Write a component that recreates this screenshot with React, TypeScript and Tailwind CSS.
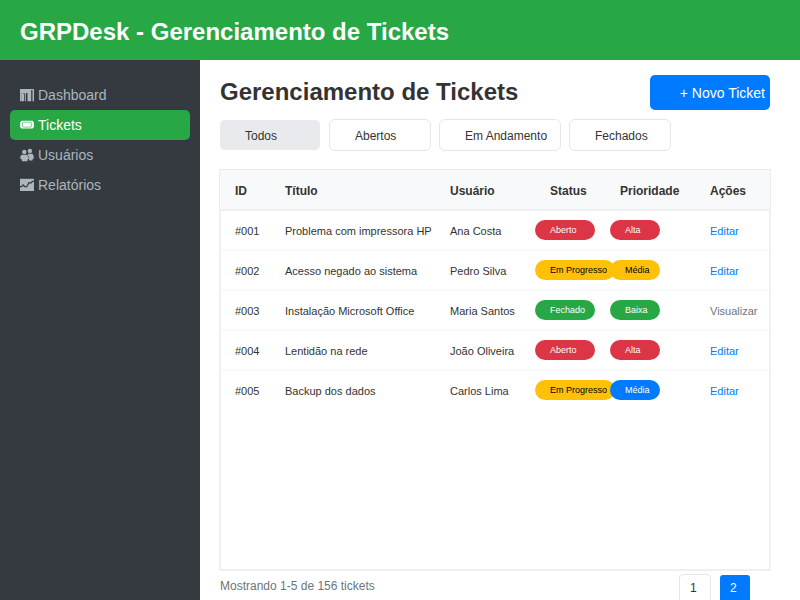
import type { ReactNode } from "react";

type Badge = { label: string; tone: string };
type Ticket = { id: string; title: string; user: string; status: Badge; priority: Badge; action: string };

const red = "bg-[#dc3545] text-white";
const green = "bg-[#28a745] text-white";
const yellow = "bg-[#ffc107] text-black";
const blue = "bg-[#007bff] text-white";

const tickets: Ticket[] = [
  { id: "#001", title: "Problema com impressora HP", user: "Ana Costa", status: { label: "Aberto", tone: red }, priority: { label: "Alta", tone: red }, action: "Editar" },
  { id: "#002", title: "Acesso negado ao sistema", user: "Pedro Silva", status: { label: "Em Progresso", tone: yellow }, priority: { label: "Média", tone: yellow }, action: "Editar" },
  { id: "#003", title: "Instalação Microsoft Office", user: "Maria Santos", status: { label: "Fechado", tone: green }, priority: { label: "Baixa", tone: green }, action: "Visualizar" },
  { id: "#004", title: "Lentidão na rede", user: "João Oliveira", status: { label: "Aberto", tone: red }, priority: { label: "Alta", tone: red }, action: "Editar" },
  { id: "#005", title: "Backup dos dados", user: "Carlos Lima", status: { label: "Em Progresso", tone: yellow }, priority: { label: "Média", tone: blue }, action: "Editar" },
];

const BarsIcon = () => (
  <svg width="14" height="14" viewBox="0 0 14 14" fill="currentColor">
    <path d="M0 1h14v12.200h-1.500V2h-1.300v11.200H7.500V5H6v8.200H5.200V5.500H3v7.700H1.500V4.200H1.300v9H0z" />
    <path d="M3 6h1.200v7.200H3z" />
  </svg>
);

const TicketIcon = () => (
  <svg width="14" height="14" viewBox="0 0 14 14">
    <path d="M1.200 2.700h11.600c0 .9.4 1.300 1.200 1.400v1c-.6.1-.6.9 0 1v1.100c-.6.1-.6.9 0 1v1.100c-.8.1-1.200.5-1.200 1.300H1.200C1.200 9.800.8 9.400 0 9.300V8.200c.6-.1.6-.9 0-1V6.100c.6-.1.6-.9 0-1v-1C.8 4 1.200 3.600 1.200 2.700z" fill="currentColor" />
    <rect x="2.600" y="4.200" width="8.800" height="4.900" rx=".8" fill="none" stroke="#28a745" strokeWidth=".6" />
  </svg>
);

const UsersIcon = () => (
  <svg width="14" height="14" viewBox="0 0 14 14" fill="currentColor">
    <circle cx="9.900" cy="2.900" r="2.200" />
    <path d="M7.800 5.700h4.300c1.300.5 1.900 2.700 1.700 4.700l-1 .3-.4 1.700H9.300z" />
    <g stroke="#343a40" strokeWidth=".8" paintOrder="stroke">
      <path d="M2 6.800h4.700c1.300.5 2 2.200 2.100 4.100l-1.100.3-.4 2.100H2l-.5-2.200-1.300-.4C.1 8.800.7 7.200 2 6.800z" />
      <circle cx="4.300" cy="4" r="2.200" />
    </g>
  </svg>
);

const TrendIcon = () => (
  <svg width="14" height="14" viewBox="0 0 14 14">
    <rect y=".8" width="14" height="12.200" fill="currentColor" />
    <path d="M0 8.600h1.800l1.300-1.800 2.100 2.100 1.600-.2 2.100-4 1.900.3 1.700-1.700H14" fill="none" stroke="#343a40" strokeWidth="1.200" />
  </svg>
);

function NavItem({ icon, label, active = false }: { icon: ReactNode; label: string; active?: boolean }) {
  return (
    <a className={`flex h-[30px] items-center gap-1 rounded-[5px] pl-2.5 text-sm ${active ? "bg-[#28a745] text-white" : "text-[#adb5bd]"}`}>
      {icon}
      <span>{label}</span>
    </a>
  );
}

const columns = "grid grid-cols-[50px_165px_85px_75px_100px_60px]";

function Pill({ badge, width }: { badge: Badge; width: string }) {
  return (
    <span className={`h-5 shrink-0 rounded-full pl-[15px] text-[9px] leading-[20px] whitespace-nowrap ${width} ${badge.tone}`}>
      {badge.label}
    </span>
  );
}

function Filter({ label, width }: { label: string; width: string }) {
  return (
    <button className={`h-8 rounded-md border border-[#e3e6e9] pt-0.5 pl-[25px] text-left whitespace-nowrap ${width}`}>
      {label}
    </button>
  );
}

export default function App() {
  return (
    <div className="flex h-[600px] w-[800px] flex-col overflow-hidden bg-white font-['Liberation_Sans',Arial,sans-serif] text-[#333]">
      <header className="flex h-[60px] shrink-0 items-center bg-[#28a745] pt-1 pl-5">
        <h1 className="text-2xl font-bold text-white">GRPDesk - Gerenciamento de Tickets</h1>
      </header>
      <div className="flex min-h-0 flex-1">
        <nav className="w-[200px] shrink-0 bg-[#343a40] px-2.5 pt-5">
          <NavItem icon={<BarsIcon />} label="Dashboard" />
          <NavItem icon={<TicketIcon />} label="Tickets" active />
          <NavItem icon={<UsersIcon />} label="Usuários" />
          <NavItem icon={<TrendIcon />} label="Relatórios" />
        </nav>
        <main className="flex min-w-0 flex-1 flex-col pt-[15px] pr-[29px] pl-[19px]">
          <div className="flex h-[35px] shrink-0 justify-between pr-px pl-px">
            <h2 className="text-2xl leading-[33px] font-bold">Gerenciamento de Tickets</h2>
            <button className="w-[120px] rounded-[5px] bg-[#007bff] pr-[5px] text-right text-sm text-white">+ Novo Ticket</button>
          </div>
          <div className="mt-[9px] flex h-8 shrink-0 items-center gap-2 pl-px text-xs">
            <button className="mr-px h-[30px] w-[100px] rounded-[5px] bg-[#e9eaed] pt-0.5 pl-[25px] text-left">Todos</button>
            <Filter label="Abertos" width="w-[102px]" />
            <Filter label="Em Andamento" width="w-[122px]" />
            <Filter label="Fechados" width="w-[102px]" />
          </div>
          <div className={`mt-[18px] h-10 shrink-0 border border-b-0 border-[#e9ecee] bg-[#f8f9fa] pl-[15px] text-xs leading-[42px] font-bold ${columns}`}>
            <span>ID</span>
            <span>Título</span>
            <span>Usuário</span>
            <span className="pl-[15px]">Status</span>
            <span className="pl-2.5">Prioridade</span>
            <span>Ações</span>
          </div>
          <div className="h-[362px] shrink-0 border-2 border-[#eef0f2]">
            {tickets.map((t) => (
              <div key={t.id} className={`h-10 border-b-2 border-[#f8f9fa] pl-3.5 text-[11px] leading-[40px] whitespace-nowrap last:border-transparent ${columns}`}>
                <span>{t.id}</span>
                <span>{t.title}</span>
                <span>{t.user}</span>
                <div className="flex pt-[9px]">
                  <Pill badge={t.status} width={t.status.label === "Em Progresso" ? "w-20" : "w-[60px]"} />
                </div>
                <div className="flex pt-[9px]">
                  <Pill badge={t.priority} width="w-[50px]" />
                </div>
                <a className={t.action === "Editar" ? "text-[#007bff]" : "text-[#6c757d]"}>{t.action}</a>
              </div>
            ))}
          </div>
          <footer className="flex h-8 shrink-0 items-start pt-[3px] pl-px">
            <span className="flex-1 text-xs leading-[25px] text-[#6c757d]">Mostrando 1-5 de 156 tickets</span>
            <button className="mr-[9px] h-8 w-8 rounded-[4px] border border-[#e3e6e9] pb-1 pl-2.5 text-left text-xs">1</button>
            <button className="mt-px mr-[21px] h-[30px] w-[30px] rounded-[3px] bg-[#007bff] pb-1 pl-2.5 text-left text-xs text-white">2</button>
          </footer>
        </main>
      </div>
    </div>
  );
}
